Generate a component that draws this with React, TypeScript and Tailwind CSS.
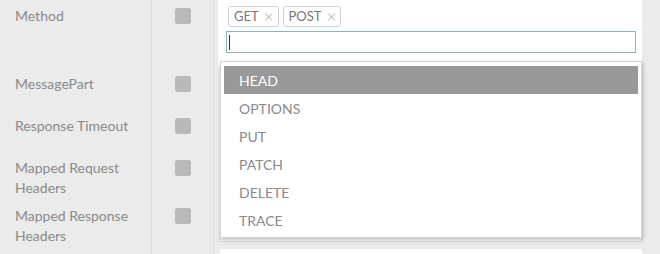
import React from "react";

const Checkbox = () => (
  <div className="w-[16px] h-[16px] rounded-[3px] bg-[#b9b9b9]" />
);

function Row({
  label,
  height,
  children,
}: {
  label: React.ReactNode;
  height: number;
  children?: React.ReactNode;
}) {
  return (
    <div className="flex" style={{ height }}>
      <div className="w-[152px] shrink-0 border-r border-[#dcdcdc] pl-[15px] pt-[6px] text-[14px] leading-[20px] text-[#8a8a8a]">
        {label}
      </div>
      <div className="w-[62px] shrink-0 border-r border-[#dcdcdc] flex justify-center pt-[8px]">
        <div className="h-fit">
          <Checkbox />
        </div>
      </div>
      <div className="flex-1 pl-[6px] pr-[18px]">{children}</div>
    </div>
  );
}

function Tag({ text }: { text: string }) {
  return (
    <div className="flex items-center h-[21px] border border-[#cfcfcf] rounded-[3px] pl-[5px] pr-[4px] text-[13px] text-[#777] gap-[5px]">
      {text}
      <span className="text-[#aaa] text-[17px] leading-none font-light">×</span>
    </div>
  );
}

export default function App() {
  const items = ["OPTIONS", "PUT", "PATCH", "DELETE", "TRACE"];
  return (
    <div
      className="relative w-[660px] h-[254px] overflow-hidden bg-[#ebebeb]"
      style={{ fontFamily: "Lato, 'Noto Sans', sans-serif" }}
    >
      <Row label="Method" height={68}>
        <div className="ml-[-2px] bg-white h-[66px] pl-[8px] pr-[6px] pt-[6px]">
          <div className="flex gap-[4px] pl-[2px]">
            <Tag text="GET" />
            <Tag text="POST" />
          </div>
          <div className="mt-[4px] h-[22px] border border-[#86b6c6] flex items-center pl-[2px]">
            <div className="w-[1px] h-[15px] bg-[#333]" />
          </div>
        </div>
      </Row>
      <Row label="MessagePart" height={42}>
        <div className="mt-[4px] h-[32px] bg-white border border-[#dedede]" />
      </Row>
      <Row label="Response Timeout" height={42}>
        <div className="mt-[4px] h-[32px] bg-white border border-[#dedede]" />
      </Row>
      <Row
        label={
          <>
            Mapped Request
            <br />
            Headers
          </>
        }
        height={48}
      >
        <div className="mt-[4px] h-[38px] bg-white border border-[#dedede]" />
      </Row>
      <Row
        label={
          <>
            Mapped Response
            <br />
            Headers
          </>
        }
        height={49}
      >
        <div className="mt-[4px] h-[38px] bg-white border border-[#dedede]" />
      </Row>
      <Row label="" height={40}>
        <div className="h-[32px] bg-white" />
      </Row>

      <div className="absolute left-[220px] top-[61px] w-[422px] h-[177px] bg-white border border-[#d6d6d6] shadow-[1px_2px_4px_rgba(0,0,0,0.25)] px-[3px] pt-[4px]">
        <div className="h-[28px] bg-[#999999] text-white text-[14px] flex items-center pl-[15px]">
          HEAD
        </div>
        {items.map((it) => (
          <div
            key={it}
            className="h-[28px] text-[#8a8a8a] text-[14px] flex items-center pl-[15px]"
          >
            {it}
          </div>
        ))}
      </div>
    </div>
  );
}
